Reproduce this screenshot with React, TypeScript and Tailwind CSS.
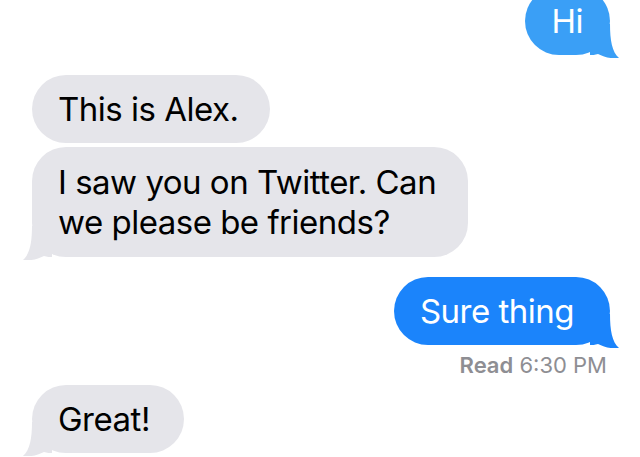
import React from 'react';

type Side = 'in' | 'out';

const Tail = ({ side, color }: { side: Side; color: string }) => (
  <svg
    width="30"
    height="34"
    viewBox="0 0 30 34"
    className={
      side === 'out'
        ? 'absolute right-[-10px] bottom-[-3px]'
        : 'absolute left-[-10px] bottom-[-3px] -scale-x-100'
    }
  >
    <path d="M0 0 H20 C20 16 22 28 29 34 C21 35 14 33 8 30 C5 31 2 31 0 31 Z" fill={color} />
  </svg>
);

const Bubble = ({
  side,
  color,
  tail,
  className,
  children,
}: {
  side: Side;
  color: string;
  tail?: boolean;
  className?: string;
  children: React.ReactNode;
}) => (
  <div
    className={`relative rounded-[34px] pl-[26px] text-[33px] leading-[40px] tracking-[-0.5px] ${
      side === 'out' ? 'self-end text-white' : 'self-start text-black'
    } ${className ?? ''}`}
    style={{ backgroundColor: color }}
  >
    {tail && <Tail side={side} color={color} />}
    <span className="relative">{children}</span>
  </div>
);

export default function App() {
  const gray = '#e5e5ea';
  return (
    <div
      className="h-[457px] w-[640px] overflow-hidden bg-white"
      style={{ fontFamily: 'Inter, "Liberation Sans", sans-serif' }}
    >
      <div className="flex flex-col pl-[32px] pr-[30px]">
        <Bubble side="out" color="#3a9ff6" tail className="-mt-[13px] py-[14px] pr-[27px]">
          Hi
        </Bubble>
        <Bubble side="in" color={gray} className="mt-[20px] py-[14px] pr-[32px]">
          This is Alex.
        </Bubble>
        <Bubble side="in" color={gray} tail className="mt-[4px] w-[436px] py-[15px] pr-[26px]">
          I saw you on Twitter. Can we please be friends?
        </Bubble>
        <Bubble side="out" color="#1b84fb" tail className="mt-[20px] py-[14px] pr-[36px]">
          Sure thing
        </Bubble>
        <div className="mt-[8px] mr-[3px] self-end text-[22px] leading-[24px] text-[#8e8e93]">
          <span className="font-semibold">Read</span> 6:30 PM
        </div>
        <Bubble side="in" color={gray} tail className="mt-[8px] py-[14px] pr-[34px]">
          Great!
        </Bubble>
      </div>
    </div>
  );
}
